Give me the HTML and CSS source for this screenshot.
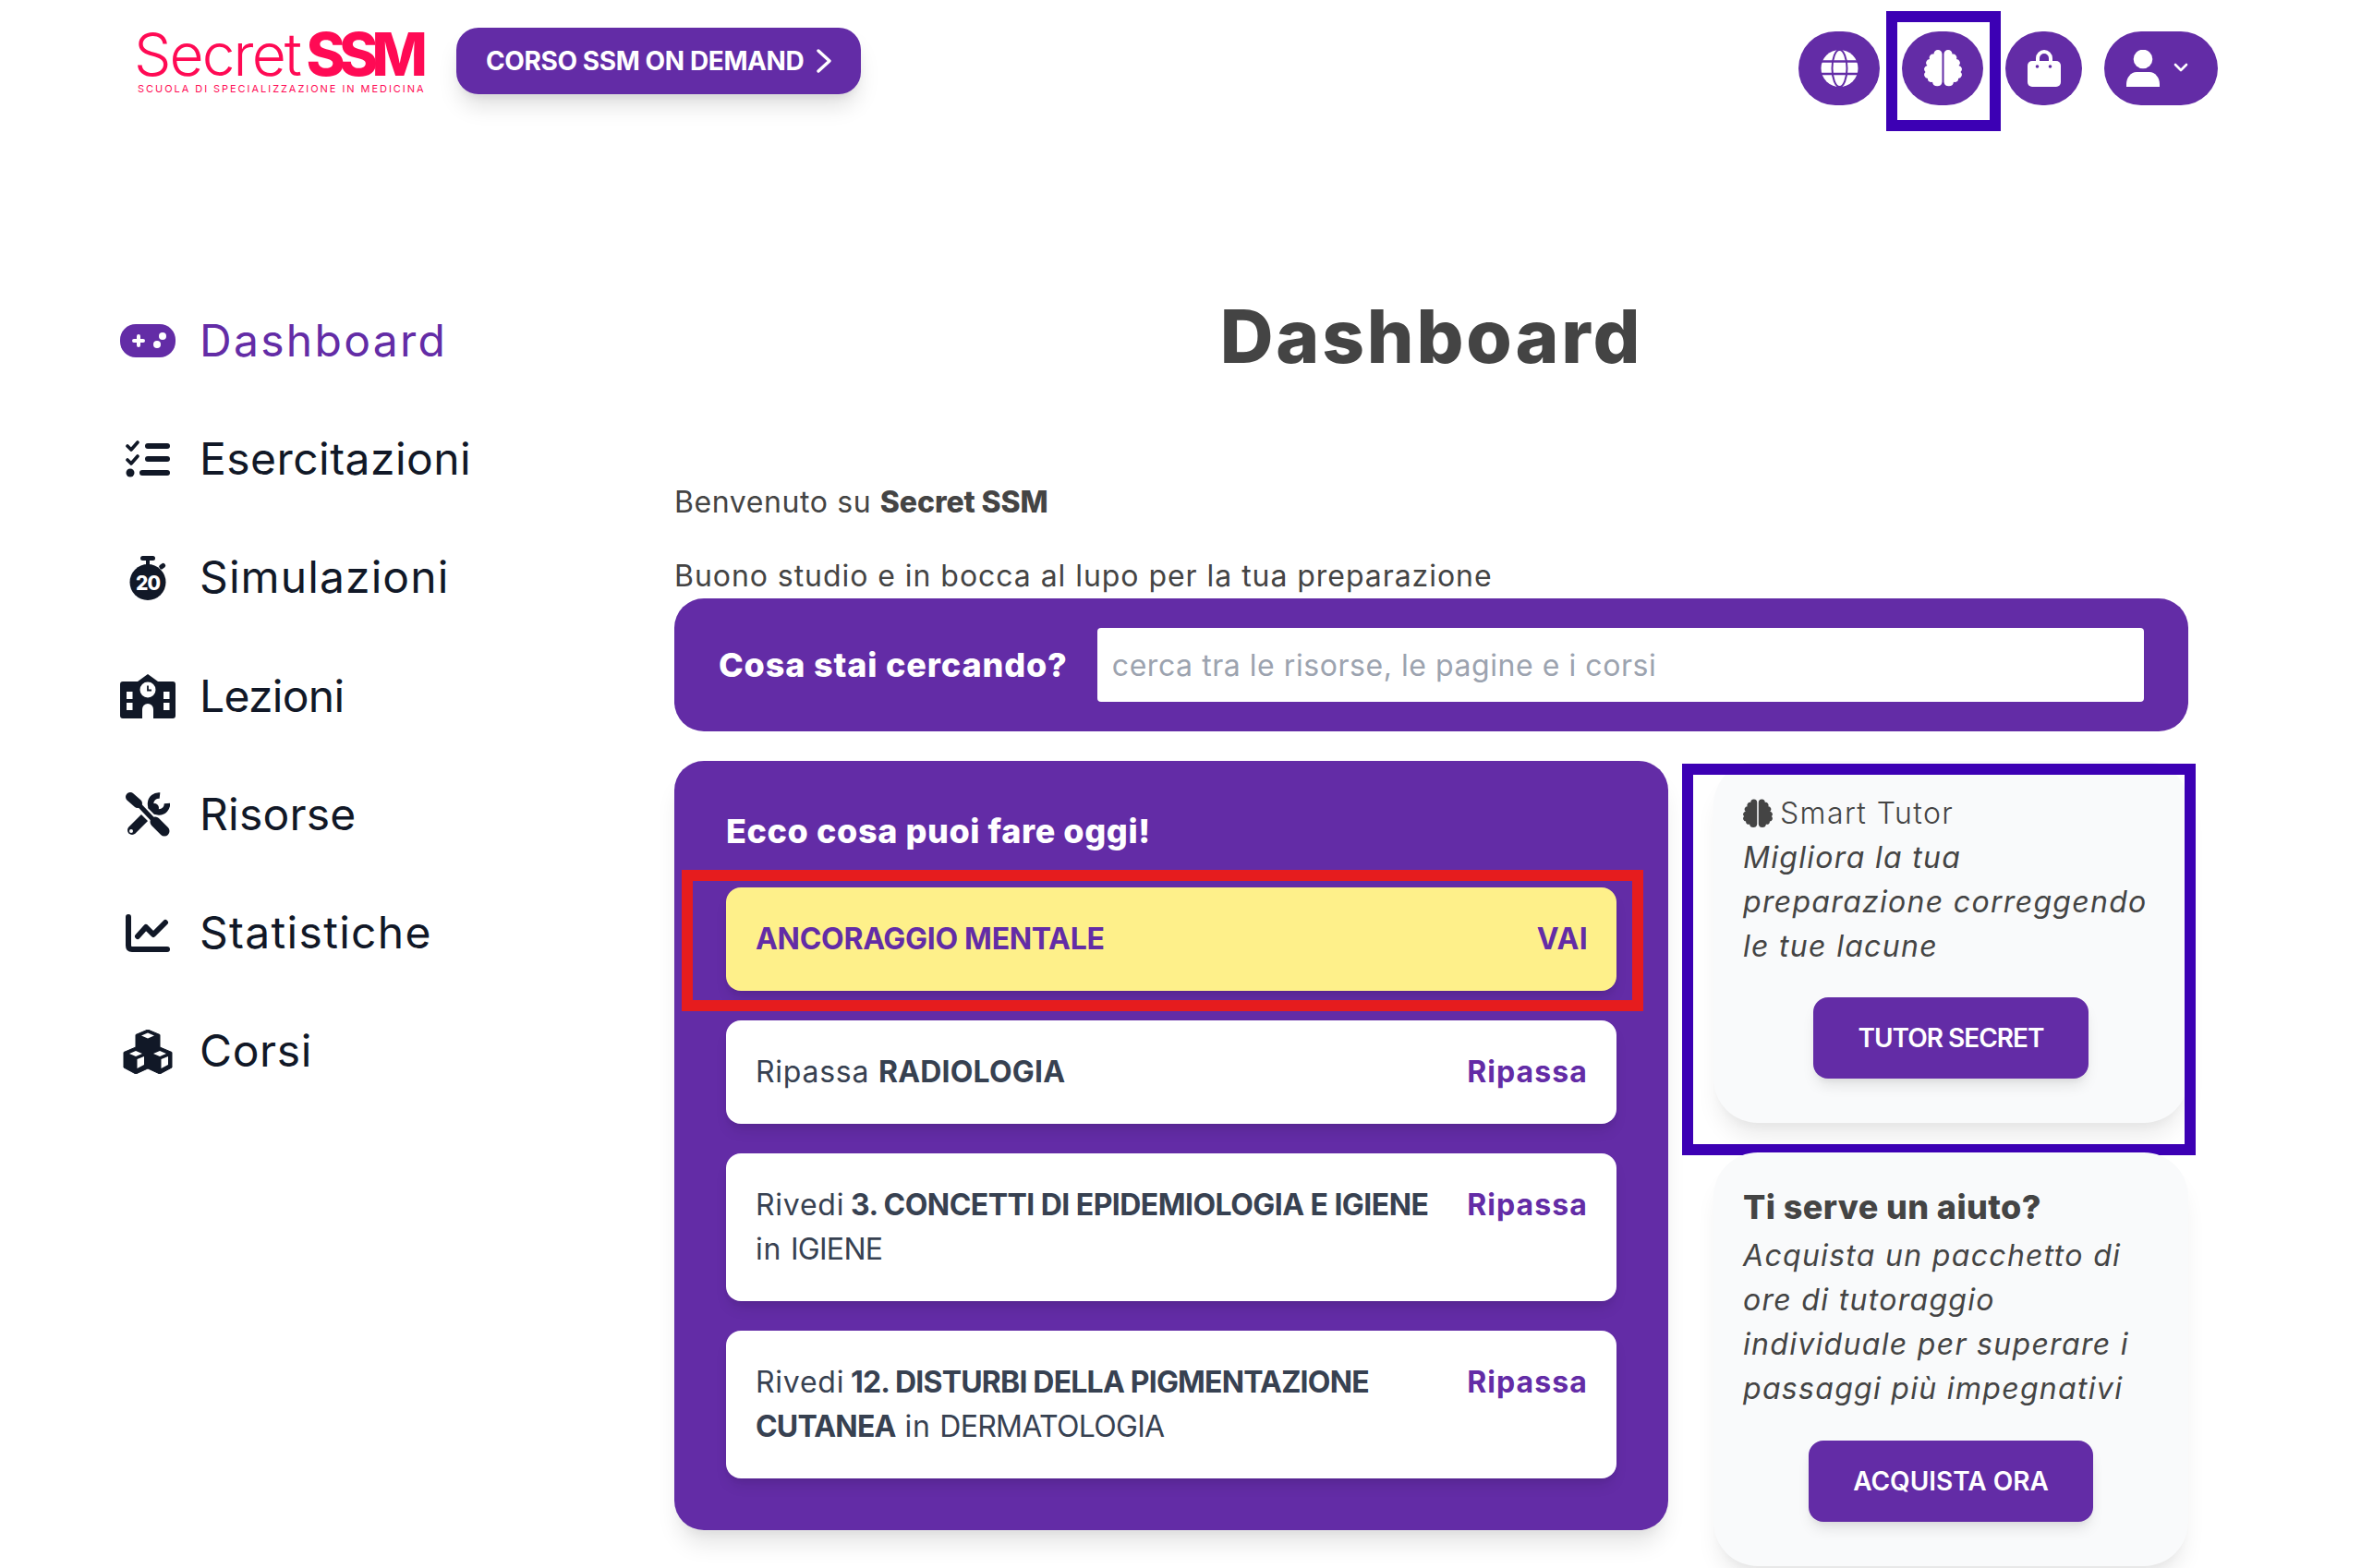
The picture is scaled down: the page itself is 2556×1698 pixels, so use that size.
FILE: index.html
```html
<!DOCTYPE html>
<html lang="it">
<head>
<meta charset="utf-8">
<title>Secret SSM - Dashboard</title>
<link rel="stylesheet" href="styles.css">
</head>
<body>
<svg class="defs" width="0" height="0" aria-hidden="true">
  <defs>
    <g id="brain">
      <path id="brain-half" d="M19.500 4.500A4.500 4.500 0 0 0 10.500 4.500A4 4 0 0 0 6 10A4 4 0 0 0 3.500 17A4 4 0 0 0 1.500 24A4 4 0 0 0 4 31A3.500 3.500 0 0 0 9 34.700A5.300 5.300 0 0 0 19.500 34.700Z"/>
      <use href="#brain-half" transform="matrix(-1 0 0 1 41 0)"/>
    </g>
  </defs>
</svg>

<header class="topbar">
  <div class="brand-group">
    <div class="logo">
      <div class="logo-main"><span class="logo-thin">Secret</span><span class="logo-bold">SSM</span></div>
      <div class="logo-sub">SCUOLA DI SPECIALIZZAZIONE IN MEDICINA</div>
    </div>
    <a class="course-btn">CORSO SSM ON DEMAND
      <svg class="course-chevron" viewBox="0 0 16 26"><path d="M2 2L14 13L2 24" fill="none" stroke="#fff" stroke-width="3.400" stroke-linecap="round" stroke-linejoin="round"/></svg>
    </a>
  </div>
  <div class="top-actions">
    <a class="round-btn">
      <svg class="ico-globe" viewBox="0 0 41 40">
        <circle cx="20.500" cy="20" r="20" fill="#fff"/>
        <ellipse cx="20.500" cy="20" rx="8" ry="20" fill="none" stroke="#632ca6" stroke-width="2"/>
        <path d="M0 12.500H41M0 26H41" stroke="#632ca6" stroke-width="2.400"/>
      </svg>
    </a>
    <a class="round-btn flagged">
      <svg class="ico-globe" viewBox="0 0 41 40" fill="#fff"><use href="#brain"/></svg>
    </a>
    <a class="round-btn bag-btn">
      <svg class="ico-bag" viewBox="0 0 36 40">
        <path d="M11 14V9a7 7 0 0 1 14 0v5" fill="none" stroke="#fff" stroke-width="4"/>
        <rect x="0" y="12" width="36" height="28" rx="5" fill="#fff"/>
        <circle cx="10.500" cy="18" r="1.800" fill="#632ca6"/>
        <circle cx="24.500" cy="18" r="1.800" fill="#632ca6"/>
      </svg>
    </a>
    <a class="user-btn">
      <svg class="ico-user" viewBox="0 0 36 40" fill="#fff">
        <circle cx="18" cy="10" r="10.300"/>
        <path d="M0 40V37C0 30 5 24 11 24H25C31 24 36 30 36 37V40Z"/>
      </svg>
      <svg class="ico-caret" viewBox="0 0 16 10"><path d="M2 2L8 8L14 2" fill="none" stroke="#fff" stroke-width="2.600" stroke-linecap="round" stroke-linejoin="round"/></svg>
    </a>
  </div>
</header>

<div class="layout">
  <nav class="sidebar">
    <a class="nav-row active">
      <span class="nav-icon">
        <svg width="60" height="36" viewBox="0 0 60 36">
          <rect width="60" height="36" rx="17" fill="#632ca6"/>
          <path d="M15 18H25M20 13V23" stroke="#fff" stroke-width="4" stroke-linecap="round"/>
          <circle cx="46" cy="13" r="4" fill="#fff"/>
          <circle cx="40" cy="22" r="4" fill="#fff"/>
        </svg>
      </span>
      <span class="nav-label nl-dash">Dashboard</span>
    </a>
    <a class="nav-row">
      <span class="nav-icon">
        <svg width="48" height="41" viewBox="0 0 48 41" fill="none" stroke="#111827" stroke-linecap="round" stroke-linejoin="round">
          <path d="M2 6L6 10L13 2M2 21L6 25L13 17" stroke-width="3.600"/>
          <path d="M24 6H45M24 20H45M18 35H45" stroke-width="6"/>
          <circle cx="5" cy="35" r="4.500" fill="#111827" stroke-width="0"/>
        </svg>
      </span>
      <span class="nav-label nl-eserc">Esercitazioni</span>
    </a>
    <a class="nav-row">
      <span class="nav-icon">
        <svg width="48" height="48" viewBox="0 0 48 48" fill="#111827">
          <rect x="16" y="0" width="16" height="5" rx="2.500"/>
          <rect x="22" y="4" width="4" height="6"/>
          <rect x="36" y="9" width="7" height="5" rx="2" transform="rotate(-38 39 11)"/>
          <circle cx="24" cy="28.500" r="19.500"/>
          <text class="watch-num" x="24" y="37" text-anchor="middle">20</text>
        </svg>
      </span>
      <span class="nav-label nl-simul">Simulazioni</span>
    </a>
    <a class="nav-row">
      <span class="nav-icon">
        <svg width="60" height="48" viewBox="0 0 60 48">
          <path d="M0 11Q0 8 3 8H19L30 0L41 8H57Q60 8 60 11V45Q60 48 57 48H3Q0 48 0 45Z" fill="#111827"/>
          <circle cx="30" cy="17" r="8.500" fill="#fff"/>
          <path d="M30 12.500V17.500H34" fill="none" stroke="#111827" stroke-width="1.800"/>
          <g fill="#fff">
            <rect x="7" y="19" width="6.500" height="8"/><rect x="7" y="31" width="6.500" height="8"/>
            <rect x="47" y="19" width="6.500" height="8"/><rect x="47" y="31" width="6.500" height="8"/>
            <path d="M24 48V38a6 6 0 0 1 12 0V48Z"/>
          </g>
        </svg>
      </span>
      <span class="nav-label nl-lez">Lezioni</span>
    </a>
    <a class="nav-row">
      <span class="nav-icon">
        <svg width="48" height="48" viewBox="0 0 48 48" fill="none" stroke="#111827">
          <path d="M37 3.500A9 9 0 1 0 45 12" stroke-width="6.500"/>
          <path d="M31 17L7 41" stroke-width="10" stroke-linecap="round"/>
          <circle cx="6" cy="42" r="2" fill="#fff" stroke="none"/>
          <path d="M6 6L42 42" stroke="#fff" stroke-width="10"/>
          <path d="M5 5L13 12" stroke-width="10" stroke-linecap="round"/>
          <path d="M13 12L32 32" stroke-width="5"/>
          <path d="M32 32L42 42" stroke-width="11" stroke-linecap="round"/>
        </svg>
      </span>
      <span class="nav-label nl-ris">Risorse</span>
    </a>
    <a class="nav-row">
      <span class="nav-icon">
        <svg width="48" height="41" viewBox="0 0 48 41" fill="none" stroke="#111827" stroke-width="6" stroke-linecap="round" stroke-linejoin="round">
          <path d="M3 3V34Q3 38 7 38H45"/>
          <path d="M13 24L22 14L30 22L43 9"/>
        </svg>
      </span>
      <span class="nav-label nl-stat">Statistiche</span>
    </a>
    <a class="nav-row">
      <span class="nav-icon">
        <svg width="54" height="48" viewBox="0 0 54 48" fill="#111827">
          <path d="M27 0L40 5.500V19L53 24.500V41L40 48L27 42L14 48L1 41V24.500L14 19V5.500Z" stroke="#111827" stroke-width="1" stroke-linejoin="round"/>
          <g fill="#fff">
            <path d="M27 3.500L34 6.500L27 9.500L20 6.500Z"/>
            <path d="M14 23L21 26L14 29L7 26Z"/>
            <path d="M40 23L47 26L40 29L33 26Z"/>
            <path d="M15.500 32L23 29V38L15.500 42Z"/>
            <path d="M41.500 32L49 29V38L41.500 42Z"/>
          </g>
        </svg>
      </span>
      <span class="nav-label nl-cors">Corsi</span>
    </a>
  </nav>

  <main class="content">
    <h1 class="page-title">Dashboard</h1>
    <p class="intro intro-first">Benvenuto su <strong>Secret SSM</strong></p>
    <p class="intro">Buono studio e in bocca al lupo per la tua preparazione</p>

    <section class="search-bar">
      <label class="search-label">Cosa stai cercando?</label>
      <input class="search-input" type="text" placeholder="cerca tra le risorse, le pagine e i corsi">
    </section>

    <div class="panels">
      <section class="today">
        <h2 class="today-title">Ecco cosa puoi fare oggi!</h2>
        <div class="today-list">
          <a class="task task-hl"><span class="task-text">ANCORAGGIO MENTALE</span><span class="task-go">VAI</span></a>
          <a class="task"><span class="task-text">Ripassa <b class="b-short">RADIOLOGIA</b></span><span class="task-go">Ripassa</span></a>
          <a class="task"><span class="task-text">Rivedi <b class="b-mid">3. CONCETTI DI EPIDEMIOLOGIA E IGIENE</b><br>in <span class="caps">IGIENE</span></span><span class="task-go">Ripassa</span></a>
          <a class="task"><span class="task-text">Rivedi <b class="b-long">12. DISTURBI DELLA PIGMENTAZIONE<br>CUTANEA</b> in <span class="caps">DERMATOLOGIA</span></span><span class="task-go">Ripassa</span></a>
        </div>
      </section>

      <aside class="side-cards">
        <section class="side-card flagged-card">
          <div class="side-head"><svg class="ico-mini-brain" viewBox="0 0 41 40" fill="#444"><use href="#brain"/></svg> Smart Tutor</div>
          <p class="side-text">Migliora la tua<br>preparazione correggendo<br>le tue lacune</p>
          <div class="side-action"><a class="solid-btn btn-tight">TUTOR SECRET</a></div>
        </section>
        <section class="side-card">
          <h3 class="side-title">Ti serve un aiuto?</h3>
          <p class="side-text">Acquista un pacchetto di<br>ore di tutoraggio<br>individuale per superare i<br>passaggi più impegnativi</p>
          <div class="side-action"><a class="solid-btn">ACQUISTA ORA</a></div>
        </section>
      </aside>
    </div>
  </main>
</div>
</body>
</html>
```
FILE: styles.css
```css
* { box-sizing: border-box; }
html, body { margin: 0; padding: 0; background: #fff; }
body { font-family: Inter, "Noto Sans", sans-serif; color: #444; overflow: hidden; height: 1698px; }
.defs { position: absolute; }
a { display: block; text-decoration: none; color: inherit; }
h1, h2, h3, p { margin: 0; }

/* top bar */
.topbar { display: flex; justify-content: space-between; align-items: flex-start; height: 305px; padding: 30px 155px 0 145px; }
.brand-group { display: flex; gap: 32px; align-items: flex-start; }
.logo { width: 317px; color: #ff0a54; }
.logo-main { display: flex; justify-content: space-between; height: 60px; font-size: 64px; line-height: 58px; white-space: nowrap; }
.logo-thin { font-weight: 300; letter-spacing: -1.900px; }
.logo-bold { font-weight: 800; letter-spacing: -6.800px; margin-right: 6px; }
.logo-sub { padding-left: 4px; font-size: 11px; line-height: 12px; letter-spacing: 1.950px; white-space: nowrap; }
.course-btn { display: flex; align-items: center; gap: 14px; height: 72px; padding: 0 32px 0 32px; border-radius: 24px; background: #632ca6; color: #fff; font-size: 28px; font-weight: 700; letter-spacing: -.4px; white-space: nowrap; box-shadow: 0 16px 24px -4px rgba(0,0,0,.13), 0 6px 10px -4px rgba(0,0,0,.08); }
.course-chevron { width: 16px; height: 26px; }
.top-actions { display: flex; gap: 24px; margin-top: 4px; }
.round-btn { position: relative; display: flex; align-items: center; justify-content: center; width: 88px; height: 80px; border-radius: 40px; background: #632ca6; }
.bag-btn { width: 83px; }
.ico-globe { width: 41px; height: 40px; }
.ico-bag { width: 36px; height: 40px; }
.flagged::after { content: ""; position: absolute; top: -22px; left: -17px; right: -19px; bottom: -28px; border: 12px solid #3c00b4; }
.user-btn { display: flex; align-items: center; width: 123px; height: 80px; padding: 0 0 0 24px; gap: 15px; border-radius: 40px; background: #632ca6; }
.ico-user { width: 36px; height: 40px; }
.ico-caret { width: 16px; height: 10px; margin-top: -2px; }

/* layout */
.layout { display: grid; grid-template-columns: 600px 1639px; padding-left: 130px; }

/* sidebar */
.nav-row { display: flex; align-items: center; gap: 26px; height: 128.300px; padding-bottom: 2px; font-size: 48px; font-weight: 400; color: #111827; }
.nav-row.active { color: #632ca6; }
.nav-icon { display: flex; align-items: center; justify-content: center; width: 60px; margin-top: 2px; }
.nl-dash { letter-spacing: 2.300px; }
.nl-eserc { letter-spacing: .45px; }
.nl-simul { letter-spacing: 1.100px; }
.nl-lez { letter-spacing: -.7px; }
.nl-ris { letter-spacing: .2px; }
.nl-stat { letter-spacing: 1.300px; }
.nl-cors { letter-spacing: .6px; }
.watch-num { font-size: 21px; font-weight: 800; fill: #fff; letter-spacing: -1px; }

/* main */
.page-title { font-size: 80px; line-height: 118px; font-weight: 800; letter-spacing: 2.800px; text-align: center; color: #444; margin-bottom: 97px; }
.intro { font-size: 32px; line-height: 48px; font-weight: 400; letter-spacing: .95px; color: #444; margin-bottom: 32px; }
.intro-first { letter-spacing: .6px; }
.intro:last-of-type { margin-bottom: 0; }
.intro strong { font-weight: 800; letter-spacing: -.1px; }

.search-bar { display: flex; align-items: center; gap: 32px; height: 144px; padding: 0 48px; border-radius: 32px; background: #632ca6; }
.search-label { font-size: 36px; font-weight: 800; letter-spacing: .85px; color: #fff; white-space: nowrap; }
.search-input { flex: 1; height: 80px; min-width: 0; border: 0; border-radius: 4px; padding: 0 16px; background: #fff; font: 400 32px Inter, sans-serif; letter-spacing: .55px; color: #444; }
.search-input::placeholder { color: #9ca3af; opacity: 1; }

.panels { display: grid; grid-template-columns: 1076px 514px; gap: 49px; margin-top: 32px; align-items: start; }

.today { padding: 56px; border-radius: 32px; background: #632ca6; box-shadow: 0 20px 25px -5px rgba(0,0,0,.1), 0 10px 10px -5px rgba(0,0,0,.04); }
.today-title { font-size: 36px; line-height: 40px; font-weight: 800; letter-spacing: .6px; color: #fff; margin-bottom: 41px; }
.today-list { display: flex; flex-direction: column; gap: 32px; }
.task { position: relative; display: flex; justify-content: space-between; align-items: flex-start; gap: 24px; padding: 32px; border-radius: 16px; background: #fff; box-shadow: 0 10px 15px -3px rgba(0,0,0,.1), 0 4px 6px -2px rgba(0,0,0,.05); }
.task-text { font-size: 32px; line-height: 48px; font-weight: 400; letter-spacing: .75px; color: #374151; white-space: nowrap; }
.task-text b { font-weight: 700; }
.caps { letter-spacing: -.7px; }
.b-short { letter-spacing: .2px; }
.b-mid { margin-left: -3px; letter-spacing: -.55px; }
.b-long { margin-left: -3px; letter-spacing: -.8px; }
.task-go { margin-right: -1px; font-size: 32px; line-height: 48px; font-weight: 700; letter-spacing: 1.100px; color: #632ca6; white-space: nowrap; }
.task-hl { background: #fef08a; }
.task-hl .task-text { font-weight: 700; letter-spacing: -.3px; color: #632ca6; }
.task-hl .task-go { letter-spacing: .3px; }
.task-hl::after { content: ""; position: absolute; top: -19px; left: -48px; right: -29px; bottom: -22px; border: 12px solid #e61c1e; }

.side-cards { display: flex; flex-direction: column; gap: 32px; }
.side-card { position: relative; padding: 32px 32px 48px; border-radius: 48px; background: #f9fafb; box-shadow: 0 20px 25px -5px rgba(0,0,0,.08), 0 10px 10px -5px rgba(0,0,0,.03); }
.flagged-card { padding-top: 33px; }
.flagged-card .side-action { margin-top: 31px; }
.flagged-card::after { content: ""; position: absolute; top: 3px; left: -34px; right: -8px; bottom: -35px; border: 12px solid #3c00b4; }
.side-head { display: flex; align-items: center; gap: 8px; font-size: 32px; line-height: 48px; font-weight: 300; letter-spacing: 1.400px; color: #444; }
.ico-mini-brain { width: 32px; height: 32px; }
.side-title { font-size: 36px; line-height: 54px; margin-bottom: 2px; font-weight: 800; letter-spacing: .4px; color: #444; }
.side-text { font-size: 32px; line-height: 48px; font-style: italic; font-weight: 400; letter-spacing: 1.300px; color: #444; white-space: nowrap; }
.side-action { display: flex; justify-content: center; margin-top: 32px; }
.solid-btn { height: 88px; padding: 0 48px; border-radius: 16px; background: #632ca6; color: #fff; font-size: 28px; line-height: 88px; font-weight: 600; white-space: nowrap; box-shadow: 0 10px 15px -3px rgba(0,0,0,.1), 0 4px 6px -2px rgba(0,0,0,.05); }
.btn-tight { letter-spacing: -1px; }
```
